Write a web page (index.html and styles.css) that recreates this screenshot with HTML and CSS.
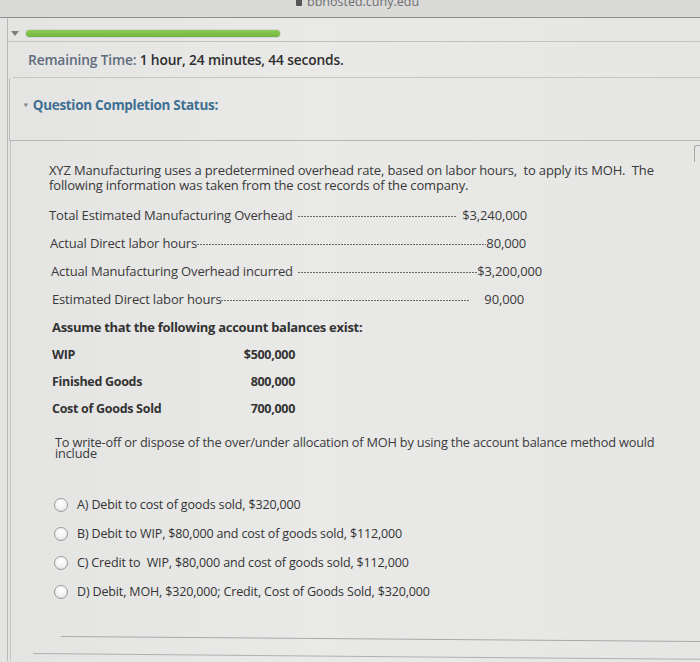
FILE: index.html
```html
<!DOCTYPE html>
<html>
<head>
<meta charset="utf-8">
<link rel="stylesheet" href="styles.css">
</head>
<body>
<div class="topbar">
  <div class="url"><span class="lock"></span>bbhosted.cuny.edu</div>
</div>
<div class="page">
  <div class="progress">
    <span class="tri"></span>
    <div class="track"><div class="bar"></div></div>
  </div>
  <div class="time"><span class="tlabel">Remaining Time:</span> 1 hour, 24 minutes, 44 seconds.</div>
  <div class="status">
    <span class="chev">&#x2BC6;</span><span class="stitle">Question Completion Status:</span>
  </div>
  <div class="question">
    <div class="edge"></div>
    <p class="intro">XYZ Manufacturing uses a predetermined overhead rate, based on labor hours,&nbsp; to apply its MOH.&nbsp; The following information was taken from the cost records of the company.</p>
    <div class="row w1"><span>Total Estimated Manufacturing Overhead</span><span class="dash gapl"></span><span class="gapl">$3,240,000</span></div>
    <div class="row w2"><span>Actual Direct labor hours</span><span class="dash"></span><span>80,000</span></div>
    <div class="row w3"><span>Actual Manufacturing Overhead incurred</span><span class="dash gapl"></span><span>$3,200,000</span></div>
    <div class="row w4"><span>Estimated Direct labor hours</span><span class="dash"></span><span class="gapv">90,000</span></div>
    <p class="assume">Assume that the following account balances exist:</p>
    <div class="accounts">
      <span>WIP</span><span class="amt">$500,000</span>
      <span>Finished Goods</span><span class="amt">800,000</span>
      <span>Cost of Goods Sold</span><span class="amt">700,000</span>
    </div>
    <p class="ask">To write-off or dispose of the over/under allocation of MOH by using the account balance method would include</p>
    <ul class="options">
      <li><span class="radio"></span>A) Debit to cost of goods sold, $320,000</li>
      <li><span class="radio"></span>B) Debit to WIP, $80,000 and cost of goods sold, $112,000</li>
      <li><span class="radio"></span>C) Credit to&nbsp; WIP, $80,000 and cost of goods sold, $112,000</li>
      <li><span class="radio"></span>D) Debit, MOH, $320,000; Credit, Cost of Goods Sold, $320,000</li>
    </ul>
    <div class="rule1"></div>
    <div class="rule2"></div>
  </div>
</div>
</body>
</html>
```
FILE: styles.css
```css
* { box-sizing: border-box; }
html, body { margin: 0; padding: 0; }
body {
  width: 700px;
  height: 662px;
  overflow: hidden;
  background: linear-gradient(90deg, #e4e4e3 0%, #e9e9e8 45%, #e6e6e5 100%);
  font-family: "Open Sans", "Noto Sans", sans-serif;
  font-size: 13px;
  color: #333;
  letter-spacing: -0.15px;
}
.topbar {
  height: 18px;
  background: #dadad9;
  border-bottom: 1px solid #8e8e8e;
  overflow: hidden;
  position: relative;
}
.url {
  margin-left: 296px;
  margin-top: -5px;
  font-size: 12.5px;
  line-height: 14px;
  color: #6e6e6e;
  display: flex;
  align-items: center;
  gap: 5px;
  letter-spacing: 0;
}
.lock {
  width: 6px; height: 7px;
  background: #555;
  border-radius: 1px;
  margin-top: 1px;
}
.page {
  margin-left: 7px;
  border-left: 1px solid #b8b8b8;
}
.progress {
  height: 24px;
  display: flex;
  align-items: flex-start;
  padding-top: 11px;
  border-bottom: 1px solid #c2c2c2;
}
.tri {
  width: 0; height: 0;
  margin-left: 3px;
  margin-top: 2px;
  border-left: 4px solid transparent;
  border-right: 4px solid transparent;
  border-top: 5px solid #7d7d7d;
}
.track {
  margin-left: 6px;
  width: 256px;
  height: 9px;
  border-radius: 5px;
  background: #d6d6d6;
  padding: 1px;
}
.bar {
  height: 100%;
  border-radius: 4px;
  background: linear-gradient(#8ccc55, #72b33f);
}
.time {
  height: 36px;
  line-height: 35px;
  padding-left: 16px;
  border-bottom: 1px solid #c6c6c6;
  margin-left: 4px;
  font-weight: 600;
  font-size: 13.75px;
  color: #2e2e2e;
}
.tlabel { color: #5f6c7d; }
.status {
  height: 63px;
  border-left: 1px solid #bdbdbd;
  border-bottom: 1px solid #b5b5b5;
  margin-left: 1px;
  padding-top: 19px;
  padding-left: 13px;
  line-height: 16px;
  font-weight: 700;
  color: #3f6f92;
  font-size: 13.5px;
  letter-spacing: -0.3px;
}
.chev { font-size: 7px; color: #8a8a8a; vertical-align: 2px; margin-right: 4px; }
.question {
  position: relative;
  padding-left: 38px;
  padding-top: 22px;
  height: 520px;
  border-left: 1px solid #c4c4c4;
  margin-left: 2px;
}
.edge {
  position: absolute;
  right: 0;
  top: 4px;
  width: 6px;
  height: 17px;
  border-left: 1px solid #a8a8a8;
  border-top: 1px solid #a8a8a8;
  border-radius: 3px 0 0 0;
}
p { margin: 0; }
.intro {
  line-height: 15px;
  width: 640px;
  color: #383838;
}
.row {
  display: flex;
  align-items: center;
  height: 28px;
  color: #3a3a3a;
}
.intro + .row { margin-top: 8px; }
.w1 { width: 478px; }
.w2 { width: 476px; margin-left: 1px; }
.w3 { width: 491px; margin-left: 2px; }
.w4 { width: 472px; margin-left: 3px; }
.dash {
  flex: 1;
  height: 1px;
  margin-top: 3px;
  background: repeating-linear-gradient(90deg, #6a6a6a 0 2px, transparent 2px 3px);
}
.gapl { margin-left: 5px; }
.gapv { margin-left: 14px; }
.assume {
  line-height: 28px;
  font-weight: 700;
  margin-left: 3px;
  color: #333;
  letter-spacing: -0.3px;
}
.accounts {
  display: grid;
  grid-template-columns: 188px 55px;
  grid-auto-rows: 27px;
  align-items: center;
  margin-left: 3px;
  font-weight: 700;
  font-size: 12.5px;
  color: #333;
  letter-spacing: -0.3px;
}
.amt { text-align: right; }
.ask {
  margin-top: 15px;
  margin-left: 6px;
  line-height: 11px;
  width: 628px;
  font-size: 12.75px;
  letter-spacing: -0.18px;
  color: #3a3a3a;
}
.options {
  list-style: none;
  margin: 31px 0 0 5px;
  padding: 0;
}
.options li {
  display: flex;
  align-items: center;
  height: 29px;
  color: #333;
  font-size: 12.5px;
}
.radio {
  width: 14px; height: 14px;
  border-radius: 50%;
  border: 1px solid #9a9a9a;
  background: radial-gradient(circle at 50% 35%, #ffffff 0%, #f2f2f2 55%, #d2d2d2 100%);
  margin-right: 9px;
  flex: none;
}
.rule1 {
  margin-top: 30px;
  margin-left: 12px;
  height: 1px;
  background: #a9a9a9;
  transform: rotate(0.45deg);
  transform-origin: left;
}
.rule2 {
  margin-top: 16px;
  margin-left: -16px;
  height: 1px;
  background: #b0b0b0;
  transform: rotate(0.5deg);
  transform-origin: left;
}
```
